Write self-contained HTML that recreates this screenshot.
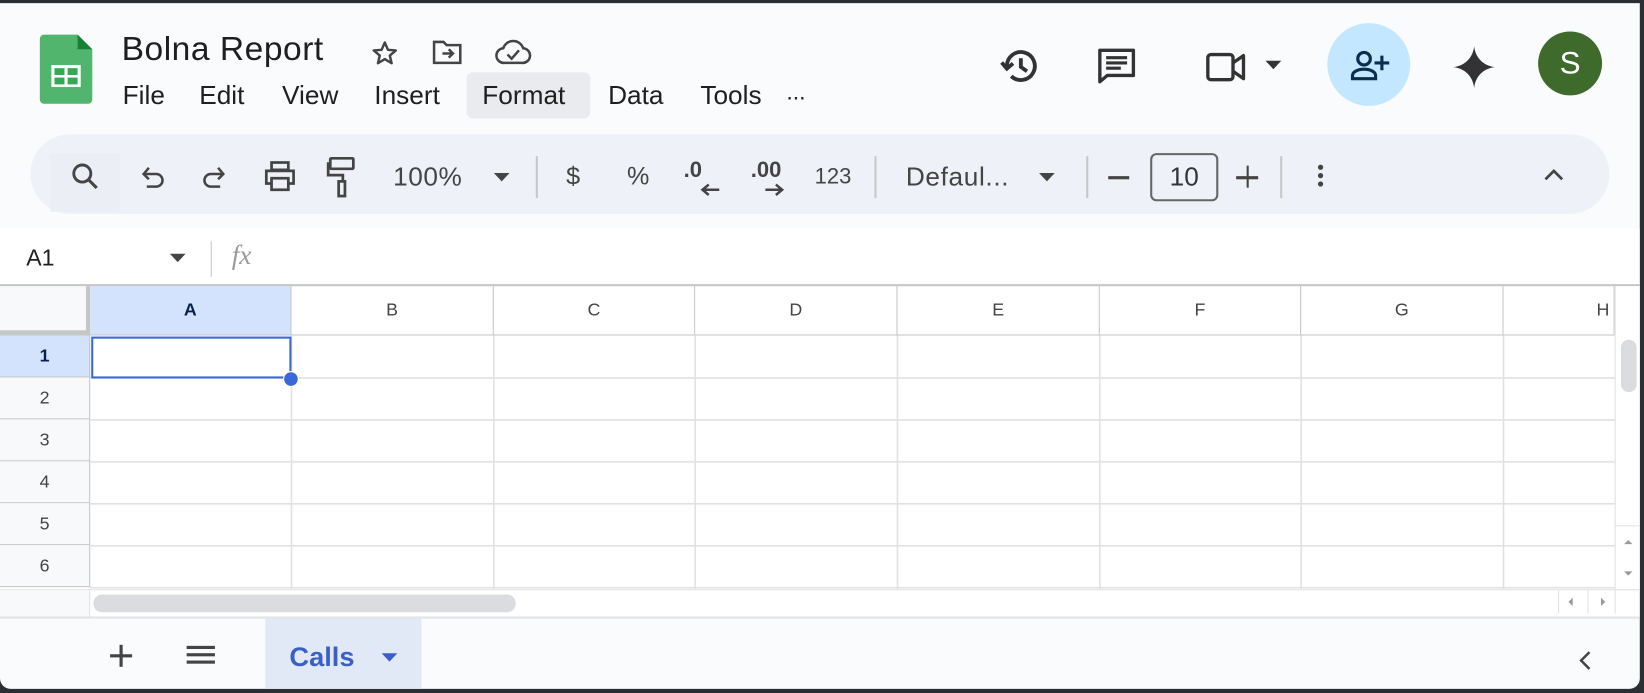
<!DOCTYPE html>
<html><head><meta charset="utf-8"><style>
*{box-sizing:border-box;margin:0;padding:0}
html,body{width:1644px;height:693px;overflow:hidden;background:#2b2e33;font-family:"Liberation Sans",Arial,sans-serif}
#w{position:absolute;left:0;top:0;width:1568px;height:661px;transform:scale(1.04847);transform-origin:0 0}
#app{position:absolute;left:0;top:3px;width:1564px;height:654px;background:#f9fbfd;border-radius:0 0 10px 10px;overflow:hidden}
.a{position:absolute}
.t{position:absolute;white-space:nowrap;color:#1f1f1f}
svg{position:absolute;overflow:visible}
.col{position:absolute;top:0;height:46px;border-right:1px solid #c4c7c5;font-size:17px;color:#444;text-align:center;line-height:46px}
.row{position:absolute;left:0;width:86px;height:40px;border-bottom:1px solid #c4c7c5;font-size:17px;color:#444;text-align:center;line-height:40px;background:#f8f9fa;border-right:1px solid #c4c7c5}
</style></head><body><div id="w"><div id="app">
<svg style="left:38px;top:30px" width="50" height="66" viewBox="0 0 50 66"><path d="M4 0H36L50 14V62a4 4 0 0 1-4 4H4a4 4 0 0 1-4-4V4a4 4 0 0 1 4-4z" fill="#34a853" opacity=".85"/><path d="M36 0L50 14H36z" fill="#188038"/><rect x="11" y="29" width="28" height="21" fill="#fff"/><rect x="14" y="32" width="9.5" height="6.5" fill="#34a853"/><rect x="26.5" y="32" width="9.5" height="6.5" fill="#34a853"/><rect x="14" y="41" width="9.5" height="6.5" fill="#34a853"/><rect x="26.5" y="41" width="9.5" height="6.5" fill="#34a853"/></svg>
<div class="t" style="left:116px;top:25px;font-size:32px;letter-spacing:0.5px">Bolna Report</div>
<svg style="left:353px;top:34px" width="28" height="28" viewBox="0 0 24 24"><path d="M12 3l2.6 6 6.4.5-4.9 4.2 1.5 6.3L12 16.6 6.4 20l1.5-6.3L3 9.5l6.4-.5z" fill="none" stroke="#444" stroke-width="2" stroke-linejoin="round"/></svg>
<svg style="left:412px;top:34px" width="30" height="26" viewBox="0 0 30 26"><path d="M2 3h9l3 3h13v17H2z" fill="none" stroke="#444" stroke-width="2.4"/><path d="M10 14h10M16 10l4 4-4 4" fill="none" stroke="#444" stroke-width="2.4"/></svg>
<svg style="left:472px;top:34px" width="34" height="26" viewBox="0 0 34 26"><path d="M9 23a7 7 0 0 1-1-14A10 10 0 0 1 27 9a7 7 0 0 1-1 14z" fill="none" stroke="#444" stroke-width="2.4"/><path d="M12 15l4 4 7-8" fill="none" stroke="#444" stroke-width="2.4"/></svg>
<div class="a" style="left:445px;top:66px;width:118px;height:44px;background:#e9ebee;border-radius:6px"></div>
<div class="t" style="left:117px;top:74px;font-size:25px">File</div>
<div class="t" style="left:190px;top:74px;font-size:25px">Edit</div>
<div class="t" style="left:269px;top:74px;font-size:25px">View</div>
<div class="t" style="left:357px;top:74px;font-size:25px">Insert</div>
<div class="t" style="left:460px;top:74px;font-size:25px">Format</div>
<div class="t" style="left:580px;top:74px;font-size:25px">Data</div>
<div class="t" style="left:668px;top:74px;font-size:25px">Tools</div>
<div class="t" style="left:750px;top:72px;font-size:22px">...</div>
<svg style="left:952px;top:40px" width="40" height="40" viewBox="0 0 24 24"><path d="M5 12a8 8 0 1 1 2.5 5.8" fill="none" stroke="#333" stroke-width="2.2"/><path d="M2 10l3 3.5 3.5-3" fill="none" stroke="#333" stroke-width="2.2"/><path d="M13 7.5v5l3.5 2.5" fill="none" stroke="#333" stroke-width="2.2"/></svg>
<svg style="left:1046px;top:42px" width="38" height="36" viewBox="0 0 38 36"><path d="M3 3h32v24H10l-7 6z" fill="none" stroke="#333" stroke-width="3.2" stroke-linejoin="round"/><path d="M9 10h20M9 15h20M9 20h14" stroke="#333" stroke-width="3"/></svg>
<svg style="left:1150px;top:46px" width="40" height="30" viewBox="0 0 40 30"><rect x="2" y="3" width="24" height="24" rx="3" fill="none" stroke="#333" stroke-width="3.2"/><path d="M26 11l10-7v22l-10-7" fill="none" stroke="#333" stroke-width="3.2" stroke-linejoin="round"/></svg>
<svg style="left:1207px;top:55px" width="16" height="9"><path d="M0 0h15L7.5 8z" fill="#333"/></svg>
<div class="a" style="left:1266px;top:19px;width:79px;height:79px;border-radius:50%;background:#c2e7ff"></div>
<svg style="left:1288px;top:44px" width="38" height="30" viewBox="0 0 38 30"><circle cx="13" cy="9" r="6" fill="none" stroke="#0b2e4f" stroke-width="3"/><path d="M2 28v-3c0-4 6-6 11-6s11 2 11 6v3z" fill="none" stroke="#0b2e4f" stroke-width="3"/><path d="M30 6v14M23 13h14" stroke="#0b2e4f" stroke-width="3"/></svg>
<svg style="left:1386px;top:41px" width="40" height="40" viewBox="0 0 40 40"><path d="M20 0C21 11 29 19 40 20C29 21 21 29 20 40C19 29 11 21 0 20C11 19 19 11 20 0z" fill="#333"/></svg>
<div class="a" style="left:1467px;top:27px;width:61px;height:61px;border-radius:50%;background:#3e6a2b;color:#fff;font-size:30px;text-align:center;line-height:61px">S</div>
<div class="a" style="left:29px;top:125px;width:1506px;height:76px;background:#eef2f8;border-radius:38px"></div>
<div class="a" style="left:48px;top:143px;width:66px;height:56px;background:#ebeff5"></div>
<svg style="left:66px;top:150px" width="30" height="30" viewBox="0 0 24 24"><circle cx="10" cy="10" r="6.5" fill="none" stroke="#444" stroke-width="2.2"/><path d="M15 15l6 6" stroke="#444" stroke-width="2.4"/></svg>
<svg style="left:134px;top:154px" width="24" height="26" viewBox="0 0 24 26"><path d="M4 9h11a6 6 0 0 1 0 12H6" fill="none" stroke="#444" stroke-width="2.4"/><path d="M8 3L3 9l5 5" fill="none" stroke="#444" stroke-width="2.4"/></svg>
<svg style="left:192px;top:154px" width="24" height="26" viewBox="0 0 24 26"><path d="M20 9H9a6 6 0 0 0 0 12h9" fill="none" stroke="#444" stroke-width="2.4"/><path d="M16 3l5 6-5 5" fill="none" stroke="#444" stroke-width="2.4"/></svg>
<svg style="left:251px;top:150px" width="32" height="30" viewBox="0 0 32 30"><rect x="8" y="2" width="16" height="7" fill="none" stroke="#444" stroke-width="2.6"/><path d="M8 22H3V10h26v12h-5" fill="none" stroke="#444" stroke-width="2.6"/><rect x="8" y="17" width="16" height="11" fill="none" stroke="#444" stroke-width="2.6"/></svg>
<svg style="left:311px;top:146px" width="30" height="40" viewBox="0 0 30 40"><rect x="4" y="2" width="22" height="10" rx="1" fill="none" stroke="#444" stroke-width="2.6"/><path d="M4 7H2v11h14v6" fill="none" stroke="#444" stroke-width="2.6"/><rect x="12" y="24" width="6" height="14" fill="none" stroke="#444" stroke-width="2.6"/></svg>
<div class="t" style="left:375px;top:152px;font-size:25px;color:#444;letter-spacing:0.5px">100%</div>
<svg style="left:471px;top:162px" width="16" height="9"><path d="M0 0h15L7.5 8z" fill="#444"/></svg>
<div class="a" style="left:511px;top:146px;width:2px;height:40px;background:#c7c7c7"></div>
<div class="t" style="left:540px;top:152px;font-size:24px;color:#444">$</div>
<div class="t" style="left:598px;top:152px;font-size:24px;color:#444">%</div>
<div class="t" style="left:652px;top:148px;font-size:21px;color:#444;font-weight:bold">.0</div>
<svg style="left:668px;top:172px" width="20" height="12"><path d="M18 6H3M8 1L2 6l6 5" fill="none" stroke="#444" stroke-width="2.4"/></svg>
<div class="t" style="left:716px;top:148px;font-size:21px;color:#444;font-weight:bold">.00</div>
<svg style="left:728px;top:172px" width="20" height="12"><path d="M2 6h15M12 1l6 5-6 5" fill="none" stroke="#444" stroke-width="2.4"/></svg>
<div class="t" style="left:777px;top:154px;font-size:21px;color:#444">123</div>
<div class="a" style="left:834px;top:146px;width:2px;height:40px;background:#c7c7c7"></div>
<div class="t" style="left:864px;top:152px;font-size:25px;color:#444;letter-spacing:0.6px">Defaul...</div>
<svg style="left:991px;top:162px" width="16" height="9"><path d="M0 0h15L7.5 8z" fill="#444"/></svg>
<div class="a" style="left:1036px;top:146px;width:2px;height:40px;background:#c7c7c7"></div>
<div class="a" style="left:1057px;top:165px;width:20px;height:2.6px;background:#444"></div>
<div class="a" style="left:1097px;top:143px;width:65px;height:46px;border:2px solid #666;border-radius:6px;font-size:25px;color:#333;text-align:center;line-height:42px">10</div>
<div class="a" style="left:1179px;top:165px;width:21px;height:2.6px;background:#444"></div>
<div class="a" style="left:1188.5px;top:155px;width:2.6px;height:21px;background:#444"></div>
<div class="a" style="left:1221px;top:146px;width:2px;height:40px;background:#c7c7c7"></div>
<div class="a" style="left:1257px;top:154px;width:5px;height:5px;border-radius:50%;background:#444;box-shadow:0 8px 0 #444,0 16px 0 #444"></div>
<svg style="left:1472px;top:158px" width="20" height="12"><path d="M2 10l8-8 8 8" fill="none" stroke="#444" stroke-width="2.6"/></svg>
<div class="a" style="left:0;top:215px;width:1564px;height:54px;background:#fff"></div>
<div class="t" style="left:25px;top:230px;font-size:22px">A1</div>
<svg style="left:162px;top:239px" width="16" height="9"><path d="M0 0h15L7.5 8z" fill="#444"/></svg>
<div class="a" style="left:201px;top:227px;width:1px;height:34px;background:#c7c7c7"></div>
<div class="t" style="left:221px;top:226px;font-size:26px;color:#999;font-style:italic;font-family:'Liberation Serif',serif">fx</div>
<div class="a" style="left:0;top:268px;width:1564px;height:291px;background:#fff;border-top:2px solid #c4c7c5">
 <div class="a" style="left:0;top:0;width:86px;height:46px;background:#f8f9fa;border-right:4px solid #c4c7c5;border-bottom:4px solid #c4c7c5"></div>
 <div class="col" style="left:86px;width:192px;background:#d3e3fd;color:#0b1f4d;font-weight:bold">A</div>
 <div class="col" style="left:278px;width:193px">B</div>
 <div class="col" style="left:471px;width:192px">C</div>
 <div class="col" style="left:663px;width:193px">D</div>
 <div class="col" style="left:856px;width:193px">E</div>
 <div class="col" style="left:1049px;width:192px">F</div>
 <div class="col" style="left:1241px;width:193px">G</div>
 <div class="col" style="left:1434px;width:106px;text-align:right;padding-right:4px">H</div>
 <div class="a" style="left:0;top:46px;width:1540px;height:1px;background:#c4c7c5"></div>
 <div class="row" style="top:47px;background:#d3e3fd;color:#0b1f4d;font-weight:bold">1</div>
 <div class="row" style="top:87px">2</div>
 <div class="row" style="top:127px">3</div>
 <div class="row" style="top:167px">4</div>
 <div class="row" style="top:207px">5</div>
 <div class="row" style="top:247px">6</div>
 <svg style="left:86px;top:47px" width="1454" height="242"><g stroke="#e1e1e1" stroke-width="1.5"><path d="M0 40.5H1454M0 80.5H1454M0 120.5H1454M0 160.5H1454M0 200.5H1454M0 240.5H1454"/><path d="M192 0V242M385 0V242M577 0V242M770 0V242M963 0V242M1155 0V242M1348 0V242"/></g></svg>
 <div class="a" style="left:87px;top:48px;width:191px;height:40px;border:2px solid #3b68d9"></div>
 <div class="a" style="left:270px;top:81px;width:15px;height:15px;border-radius:50%;background:#3b68d9;border:1.5px solid #fff"></div>
 <div class="a" style="left:1540px;top:0;width:24px;height:291px;background:#fff;border-left:1px solid #e1e1e1"></div>
 <div class="a" style="left:1546px;top:51px;width:15px;height:50px;border-radius:8px;background:#dadce0"></div>
 <div class="a" style="left:1541px;top:228px;width:23px;height:1px;background:#e1e1e1"></div>
 <svg style="left:1548px;top:240px" width="10" height="40"><path d="M1 6l4-4 4 4z M1 32l4 4 4-4z" fill="#999"/></svg>
</div>
<div class="a" style="left:0;top:559px;width:1564px;height:26px;background:#fff;border-top:1px solid #e1e1e1"></div>
<div class="a" style="left:0;top:560px;width:86px;height:25px;background:#f8f9fa;border-right:1px solid #e1e1e1"></div>
<div class="a" style="left:89px;top:564px;width:403px;height:17px;border-radius:9px;background:#dadce0"></div>
<div class="a" style="left:1486px;top:560px;width:1px;height:22px;background:#e1e1e1"></div>
<div class="a" style="left:1514px;top:560px;width:1px;height:22px;background:#e1e1e1"></div>
<div class="a" style="left:1540px;top:560px;width:1px;height:22px;background:#e1e1e1"></div>
<svg style="left:1494px;top:566px" width="40" height="10"><path d="M6 1L2 5l4 4z M33 1l4 4-4 4z" fill="#999"/></svg>
<div class="a" style="left:0;top:585px;width:1564px;height:2px;background:#e3e3e3"></div>
<div class="a" style="left:105px;top:621px;width:21px;height:2.6px;background:#444"></div>
<div class="a" style="left:114.2px;top:611.5px;width:2.6px;height:21px;background:#444"></div>
<div class="a" style="left:178px;top:613px;width:27px;height:17px;border-top:3px solid #444;border-bottom:3px solid #444"></div>
<div class="a" style="left:178px;top:620px;width:27px;height:3px;background:#444"></div>
<div class="a" style="left:253px;top:587px;width:149px;height:70px;background:#e1e9f7"></div>
<div class="t" style="left:276px;top:608px;font-size:26px;color:#3b5fc8;font-weight:bold">Calls</div>
<svg style="left:364px;top:620px" width="16" height="9"><path d="M0 0h15L7.5 8z" fill="#3b5fc8"/></svg>
<svg style="left:1505px;top:617px" width="14" height="20"><path d="M11 2L3 10l8 8" fill="none" stroke="#444" stroke-width="2.4"/></svg>
</div></div></body></html>
